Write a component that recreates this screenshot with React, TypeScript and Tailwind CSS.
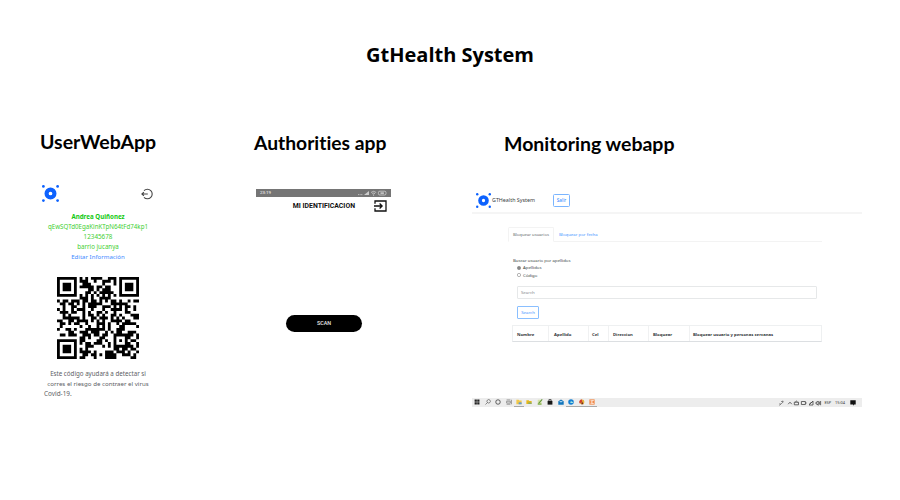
import React from 'react';

const SIZE = 29;
const ECL = 0;
const DATA_WORDS = 44;
const EC_WORDS = 26;

function multiply(a: number, b: number) {
  let z = 0;
  for (let i = 7; i >= 0; i--) {
    z = (z << 1) ^ ((z >>> 7) * 0x11d);
    z ^= ((b >>> i) & 1) * a;
  }
  return z;
}

function reedSolomon(data: number[], n: number) {
  const g: number[] = new Array(n).fill(0);
  g[n - 1] = 1;
  let root = 1;
  for (let i = 0; i < n; i++) {
    for (let j = 0; j < n; j++) {
      g[j] = multiply(g[j], root);
      if (j + 1 < n) g[j] ^= g[j + 1];
    }
    root = multiply(root, 2);
  }
  const r: number[] = new Array(n).fill(0);
  for (const b of data) {
    const f = b ^ (r.shift() as number);
    r.push(0);
    g.forEach((c, i) => {
      r[i] ^= multiply(c, f);
    });
  }
  return r;
}

function codewords(text: string) {
  const bits: number[] = [];
  const put = (v: number, n: number) => {
    for (let i = n - 1; i >= 0; i--) bits.push((v >>> i) & 1);
  };
  put(4, 4);
  put(text.length, 8);
  for (const c of text) put(c.charCodeAt(0), 8);
  put(0, 4);
  const d: number[] = [];
  for (let i = 0; i < bits.length; i += 8) d.push(parseInt(bits.slice(i, i + 8).join(''), 2));
  for (let p = 0xec; d.length < DATA_WORDS; p ^= 0xec ^ 0x11) d.push(p);
  return d.concat(reedSolomon(d, EC_WORDS));
}

function maskAt(mask: number, x: number, y: number) {
  const xy = x * y;
  return (
    [
      (x + y) % 2,
      y % 2,
      x % 3,
      (x + y) % 3,
      (Math.floor(x / 3) + Math.floor(y / 2)) % 2,
      (xy % 2) + (xy % 3),
      ((xy % 2) + (xy % 3)) % 2,
      (((x + y) % 2) + (xy % 3)) % 2,
    ][mask] === 0
  );
}

// Version 3 symbol with the given mask.
function matrix(words: number[], mask: number) {
  const m: number[][] = Array.from({ length: SIZE }, () => new Array(SIZE).fill(0));
  const fixed: boolean[][] = Array.from({ length: SIZE }, () => new Array(SIZE).fill(false));
  const set = (x: number, y: number, v: boolean) => {
    m[y][x] = v ? 1 : 0;
    fixed[y][x] = true;
  };
  for (let i = 0; i < SIZE; i++) {
    set(6, i, i % 2 === 0);
    set(i, 6, i % 2 === 0);
  }
  for (const [cx, cy] of [[3, 3], [SIZE - 4, 3], [3, SIZE - 4]]) {
    for (let dy = -4; dy <= 4; dy++) {
      for (let dx = -4; dx <= 4; dx++) {
        const x = cx + dx;
        const y = cy + dy;
        const k = Math.max(Math.abs(dx), Math.abs(dy));
        if (x >= 0 && x < SIZE && y >= 0 && y < SIZE) set(x, y, k !== 2 && k !== 4);
      }
    }
  }
  for (let dy = -2; dy <= 2; dy++) {
    for (let dx = -2; dx <= 2; dx++) set(22 + dx, 22 + dy, Math.max(Math.abs(dx), Math.abs(dy)) !== 1);
  }
  const info = (ECL << 3) | mask;
  let rem = info;
  for (let i = 0; i < 10; i++) rem = (rem << 1) ^ ((rem >>> 9) * 0x537);
  const format = ((info << 10) | rem) ^ 0x5412;
  const bit = (i: number) => ((format >>> i) & 1) === 1;
  for (let i = 0; i <= 5; i++) set(8, i, bit(i));
  set(8, 7, bit(6));
  set(8, 8, bit(7));
  set(7, 8, bit(8));
  for (let i = 9; i < 15; i++) set(14 - i, 8, bit(i));
  for (let i = 0; i < 8; i++) set(SIZE - 1 - i, 8, bit(i));
  for (let i = 8; i < 15; i++) set(8, SIZE - 15 + i, bit(i));
  set(8, SIZE - 8, true);

  let k = 0;
  for (let right = SIZE - 1; right >= 1; right -= 2) {
    if (right === 6) right = 5;
    for (let v = 0; v < SIZE; v++) {
      for (let j = 0; j < 2; j++) {
        const x = right - j;
        const y = ((right + 1) & 2) === 0 ? SIZE - 1 - v : v;
        if (fixed[y][x]) continue;
        const value = k < words.length * 8 ? (words[k >>> 3] >>> (7 - (k & 7))) & 1 : 0;
        k++;
        m[y][x] = value ^ (maskAt(mask, x, y) ? 1 : 0);
      }
    }
  }
  return m;
}

function penalty(m: number[][]) {
  let score = 0;
  const lines = [
    ...m.map((r) => r.join('')),
    ...m.map((_, x) => m.map((r) => r[x]).join('')),
  ];
  for (const line of lines) {
    for (const run of line.match(/0{5,}|1{5,}/g) ?? []) score += run.length - 2;
    for (let i = 0; i + 11 <= line.length; i++) {
      const s = line.slice(i, i + 11);
      if (s === '10111010000' || s === '00001011101') score += 40;
    }
  }
  let dark = 0;
  for (let y = 0; y < SIZE; y++) {
    for (let x = 0; x < SIZE; x++) {
      dark += m[y][x];
      if (y + 1 < SIZE && x + 1 < SIZE) {
        const sum = m[y][x] + m[y][x + 1] + m[y + 1][x] + m[y + 1][x + 1];
        if (sum === 0 || sum === 4) score += 3;
      }
    }
  }
  return score + Math.floor(Math.abs((dark * 100) / (SIZE * SIZE) - 50) / 5) * 10;
}

function encode(text: string) {
  const words = codewords(text);
  const all = [0, 1, 2, 3, 4, 5, 6, 7].map((mask) => matrix(words, mask));
  return all.reduce((best, m) => (penalty(m) < penalty(best) ? m : best));
}

const USER_ID = 'qEwSQTd0EgaKinKTpN64tFd74kp1';
const CODE = encode(USER_ID)
  .flatMap((row, y) => row.map((v, x) => (v ? `M${x} ${y}h1v1h-1z` : '')))
  .join('');

function Logo({ className }: { className: string }) {
  return (
    <svg viewBox="0 0 16 16" className={className} fill="#0d62fe">
      <circle cx="1.3" cy="1.3" r="1.3" />
      <circle cx="14.7" cy="1.3" r="1.3" />
      <circle cx="1.3" cy="14.7" r="1.3" />
      <circle cx="14.7" cy="14.7" r="1.3" />
      <circle cx="8" cy="8" r="3.7" fill="none" stroke="#0d62fe" strokeWidth="3.9" />
    </svg>
  );
}

function UserWebApp() {
  return (
    <section className="ml-10 w-[120px] shrink-0">
      <h2 className="h-7 whitespace-nowrap font-['Lato',sans-serif] text-[19.5px] font-bold leading-7 text-black">UserWebApp</h2>
      <div className="mt-[28px] flex h-[18px] items-center justify-between pl-[2px] pr-[7px]">
        <Logo className="h-[17px] w-[17px]" />
        <svg viewBox="0 0 12 12" className="mt-[2px] h-3 w-3" fill="none" stroke="#444" strokeWidth="1.1">
          <path d="M3 2.6a4.8 4.8 0 1 1 0 6.8M.8 6H6.8M2.9 4.2L.9 6l2 1.8" />
        </svg>
      </div>
      <div className="mt-[10px] w-[116px] whitespace-nowrap text-center text-[6.2px] leading-[9.9px] text-[#42cf32]">
        <p className="font-bold text-[#12c912]">Andrea Quiñonez</p>
        <p>{USER_ID}</p>
        <p className="text-[6.3px]">12345678</p>
        <p>barrio jucanya</p>
        <p className="text-[6.1px] text-[#3f8cff]">Editar Información</p>
      </div>
      <svg viewBox="0 0 29 29" className="ml-[17px] mt-[15px] h-[82px] w-[82px]">
        <path d={CODE} fill="#000" />
      </svg>
      <div className="mt-[10px] w-[116px] whitespace-nowrap text-center text-[6.2px] leading-[10px] text-[#5c6064]">
        <p>Este código ayudará a detectar si</p>
        <p className="text-[6.15px]">corres el riesgo de contraer el virus</p>
        <p className="pl-1 text-left text-[6.4px]">Covid-19.</p>
      </div>
    </section>
  );
}

function AuthoritiesApp() {
  return (
    <section className="ml-[94px] w-[137px] shrink-0 pt-[1px]">
      <h2 className="h-7 whitespace-nowrap font-['Lato',sans-serif] text-[19.3px] font-bold leading-7 text-black [font-variant-ligatures:none]">Authorities app</h2>
      <div className="ml-[2px] mt-[32px] w-[135px] font-['Roboto',sans-serif]">
        <div className="flex h-2 items-center justify-between bg-[#757575] px-1 text-[4.4px] text-white">
          <span>23:19</span>
          <svg viewBox="0 0 29 6" className="h-[6px] w-[29px]" fill="none" stroke="#ddd" strokeWidth=".7">
            <path d="M0 4.6h5" strokeDasharray="1 .6" />
            <path d="M6 5h5V1z" fill="#ccc" stroke="none" />
            <path d="M13 2.5q2.6-2.4 5.2 0M14.2 3.8q1.4-1.4 2.8 0" />
            <circle cx="15.6" cy="4.9" r=".5" fill="#fff" stroke="none" />
            <rect x="20.4" y="1.2" width="7.6" height="3.8" rx="1.4" />
            <path d="M22.5 3.1h3.4" strokeWidth="1.3" />
          </svg>
        </div>
        <div className="flex h-[18px] items-center justify-end gap-[18px] pr-1">
          <span className="whitespace-nowrap text-[6.9px] font-bold text-[#111]">MI IDENTIFICACION</span>
          <svg viewBox="0 0 14 12" className="h-3 w-[14px]" fill="none" stroke="#111" strokeWidth="1.3">
            <path d="M2 3.7V1h11v10H2V8.3M1 6h8M6.6 3.5L9.1 6 6.6 8.5" />
          </svg>
        </div>
        <button className="ml-[30px] mt-[100px] flex h-[17px] w-[76px] items-center justify-center rounded-full bg-black text-[5.4px] font-medium text-[#e8e8e8]">SCAN</button>
      </div>
    </section>
  );
}

function Radio({ label, checked }: { label: string; checked?: boolean }) {
  return (
    <div className="flex h-[7.6px] items-center gap-[2px] pl-1">
      <svg viewBox="0 0 8 8" className="h-1 w-1 shrink-0">
        <circle cx="4" cy="4" r="3.3" fill={checked ? '#888' : '#fff'} stroke="#888" strokeWidth="1.2" />
      </svg>
      <span>{label}</span>
    </div>
  );
}

function TaskIcon({ open, children }: { open?: boolean; children: React.ReactNode }) {
  return (
    <span className={`flex h-[9px] w-[10.45px] shrink-0 items-center justify-center border-b px-px ${open ? 'border-[#a8a8a8]' : 'border-transparent'}`}>
      <svg viewBox="0 0 8 8" className="h-[6px] w-[6px]">{children}</svg>
    </span>
  );
}

function Taskbar() {
  return (
    <div className="flex h-[9px] items-center justify-between bg-[#ededed]">
      <div className="flex">
        <TaskIcon><path d="M.8 .8h3v3h-3zM4.3 .8h3v3h-3zM.8 4.3h3v3h-3zM4.3 4.3h3v3h-3z" fill="#222" /></TaskIcon>
        <TaskIcon><path d="M3.3 4.7A2.3 2.3 0 1 1 6.6 1.5 2.3 2.3 0 0 1 3.3 4.7L.6 7.4" fill="none" stroke="#444" strokeWidth=".8" /></TaskIcon>
        <TaskIcon><circle cx="4" cy="4" r="3" fill="none" stroke="#333" /></TaskIcon>
        <TaskIcon><path d="M.8 1.2h5M.8 3h5v2.4h-5zM.8 7h5M7.3 1v6" fill="none" stroke="#666" strokeWidth=".8" /></TaskIcon>
        <TaskIcon open><path d="M.5 1h3l1 1h3v5h-7z" fill="#f3c94a" /><path d="M3.5 4.5h4V7h-4z" fill="#5f9bd0" /></TaskIcon>
        <TaskIcon><path d="M.5 1.5h3l1 1h3v4h-7z" fill="#e6b81c" /><path d="M3 4.8h4.5v1.5H3z" fill="#69a883" /></TaskIcon>
        <TaskIcon><path d="M1 1h5v6.5H1z" fill="#d5e2a5" /><path d="M2 6L7 .5" stroke="#5b8f35" strokeWidth="1.4" /><path d="M1 6h5v1.5H1z" fill="#70a23f" /></TaskIcon>
        <TaskIcon><path d="M.8 2.5h6.4v5H.8z" fill="#161616" /><path d="M2.5 2.5V.9h3v1.6" fill="none" stroke="#161616" /></TaskIcon>
        <TaskIcon><path d="M.4 3L4 .7 7.6 3v4.5H.4z" fill="#1376bc" /><path d="M1.4 3h5.2L4 4.8z" fill="#d8f0ff" /></TaskIcon>
        <TaskIcon open><circle cx="4" cy="4" r="3.7" fill="#1480d4" /><path d="M2.8 4.5q1-2.6 3.4-.6L7 5.4H4z" fill="#a7e6df" /></TaskIcon>
        <TaskIcon open><circle cx="4" cy="4" r="3.2" fill="#e6b23a" /><path d="M4 .6A3.4 3.4 0 0 0 1 6l3-2z" fill="#d43d31" /><path d="M4 3l2 4H3z" fill="#74251f" /></TaskIcon>
        <TaskIcon open><path d="M.5 .5h7v7h-7z" fill="#f18b4b" /><path d="M2 2h4L2.5 4 6 6H2" fill="none" stroke="#fff" strokeWidth=".8" /></TaskIcon>
      </div>
      <div className="flex items-center text-[3.9px] text-[#333]">
        <svg viewBox="0 0 44 8" className="mr-[2px] h-2 w-[44px]" fill="none" stroke="#444" strokeWidth=".8">
          <path d="M1.5 6.5l3-3M3 2.5h2.5M4.7 1.6v2.5M1 5h2" stroke="#777" />
          <path d="M10.2 5.2L12 3.2l1.8 2" />
          <path d="M16.3 3.2h4.2v2.6h-4.2zM17.2 3.2q1.2-2.2 2.4 0" />
          <path d="M23.4 2.5h4v3h-4zM28 3.3v1.4" />
          <path d="M31 6h4V2zM31.5 4.5L34.5 3" />
          <path d="M38 3.2v1.8h1l1.2 1.3V2L39 3.2zM41.4 2.6v3M42.6 2v4.2" />
        </svg>
        <span className="mr-[4px]">ESP</span>
        <span className="mr-[5px]">15:04</span>
        <svg viewBox="0 0 6 6" className="mr-[6px] h-[6px] w-[6px]"><path d="M.3 .3h5.4v4.2H4L3 5.8V4.5H.3z" fill="#111" /></svg>
      </div>
    </div>
  );
}

function MonitoringWebApp() {
  return (
    <section className="ml-[81px] w-[390px] shrink-0 pt-[2px]">
      <h2 className="ml-8 h-7 whitespace-nowrap font-['Lato',sans-serif] text-[19.5px] font-bold leading-7 text-black [font-variant-ligatures:none]">Monitoring webapp</h2>
      <div className="mt-[29px] flex h-[27px] items-center border-b-2 border-[#f5f5f5] pl-[4px] pt-[2px]">
        <Logo className="h-[15px] w-[15px]" />
        <span className="ml-[1px] w-[61px] whitespace-nowrap text-[5.35px] text-[#3a3f44]">GTHealth System</span>
        <button className="flex h-[13px] w-[17px] items-center justify-center rounded-[1.5px] border border-[#7ab5ff] text-[4.7px] text-[#2684ff]">Salir</button>
      </div>
      <div className="ml-[36px] mt-[13px] flex h-[15px] w-[314px] border-b border-[#f3f3f3] text-[4.2px]">
        <span className="-mb-px flex w-[46px] items-center justify-center whitespace-nowrap rounded-t-[1.5px] border border-b-white border-[#f3f3f3] pt-px text-[#62676c]">Bloquear usuarios</span>
        <span className="ml-[5px] flex items-center whitespace-nowrap pt-px text-[4.3px] text-[#3f94ff]">Bloquear por fecha</span>
      </div>
      <div className="ml-[41px] mt-[14.5px] text-[4.3px] leading-[7.5px] text-[#3a3f44]">
        <p>Buscar usuario por apellidos</p>
        <Radio label="Apellidos" checked />
        <Radio label="Código" />
        <div className="ml-1 mt-[7px] flex h-[13px] w-[300px] items-center rounded-[1px] border border-[#e6e8e9] pl-[3px] text-[#858a8f]">Search</div>
        <button className="ml-1 mt-[7px] flex h-[13px] w-[22px] items-center justify-center rounded-[1px] border border-[#8abfff] text-[#3f94ff]">Search</button>
      </div>
      <div className="ml-10 mt-[6px] flex h-[17px] w-[310px] items-stretch border border-b-[#dcdfe2] border-[#eef0f1] text-[4.25px] font-bold text-[#303438]">
        <span className="flex w-[36px] items-center border-r border-[#f0f1f2] pl-1">Nombre</span>
        <span className="flex w-[40px] items-center border-r border-[#f0f1f2] pl-[5px]">Apellido</span>
        <span className="flex w-[20px] items-center border-r border-[#f0f1f2] pl-[3px]">Cel</span>
        <span className="flex w-[40px] items-center border-r border-[#f0f1f2] pl-1">Direccion</span>
        <span className="flex w-[41px] items-center border-r border-[#f0f1f2] pl-1">Bloquear</span>
        <span className="flex items-center whitespace-nowrap pl-[3px]">Bloquear usuario y personas cercanas</span>
      </div>
      <div className="mt-[56px]"><Taskbar /></div>
    </section>
  );
}

export default function App() {
  return (
    <main className="h-[500px] w-[900px] overflow-hidden bg-white font-['Noto_Sans',sans-serif]">
      <h1 className="flex h-[128px] justify-center whitespace-nowrap pt-[41px] font-['Open_Sans',sans-serif] text-[20px] font-bold leading-7 text-black">GtHealth System</h1>
      <div className="flex items-start">
        <UserWebApp />
        <AuthoritiesApp />
        <MonitoringWebApp />
      </div>
    </main>
  );
}
